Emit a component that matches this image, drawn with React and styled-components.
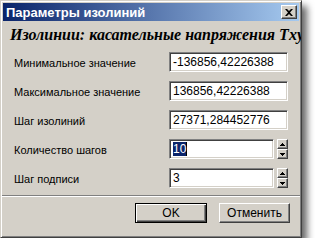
import React from 'react';
import styled, {createGlobalStyle} from 'styled-components';

const Global = createGlobalStyle`
    html, body{
        margin: 0;
        padding: 0;
        background: #fff;
    }
    body{
        font-family: "Liberation Sans", Arial, sans-serif;
        font-size: 11px;
    }
`;

const Window = styled.div`
    width: 302px;
    height: 238px;
    box-sizing: border-box;
    background: #d4d0c8;
    border: 1px solid;
    border-color: #d4d0c8 #404040 #404040 #d4d0c8;
    box-shadow: inset 1px 1px #fff, inset -1px -1px #808080, 5px 6px 7px rgba(0, 0, 0, 0.6);
    padding: 2px;
    display: flex;
    flex-direction: column;
    overflow: hidden;
`;

const TitleBar = styled.div`
    height: 18px;
    display: flex;
    align-items: center;
    justify-content: space-between;
    padding: 0 2px 0 3px;
    background: linear-gradient(to right, #0a246a, #a6caf0);
    color: #fff;
    font-weight: bold;
    font-size: 13px;
`;

const CloseBtn = styled.div`
    width: 16px;
    height: 14px;
    box-sizing: border-box;
    background: #d4d0c8;
    border: 1px solid;
    border-color: #fff #404040 #404040 #fff;
    box-shadow: inset -1px -1px #808080;
    display: flex;
    align-items: center;
    justify-content: center;
`;

/* the caption is wider than the dialog and is clipped at its right edge, as in the original */
const Heading = styled.div`
    font-family: "Liberation Serif", "Times New Roman", serif;
    font-style: italic;
    font-weight: bold;
    font-size: 16px;
    white-space: nowrap;
    padding: 5px 0 0 7px;
    height: 25px;
    color: #000;
`;

const Form = styled.div`
    display: grid;
    grid-template-columns: 155px 1fr;
    row-gap: 9px;
    padding: 1px 0 0 11px;
`;

const Label = styled.div`
    height: 20px;
    line-height: 22px;
    color: #000;
`;

const Field = styled.div`
    display: flex;
    align-items: center;
    gap: 3px;
`;

const Input = styled.div`
    width: ${p => p.$w}px;
    height: 20px;
    box-sizing: border-box;
    background: #fff;
    border: 1px solid;
    border-color: #808080 #fff #fff #808080;
    box-shadow: inset 1px 1px #404040, inset -1px -1px #d4d0c8;
    padding: 0 3px;
    line-height: 19px;
    font-size: 12px;
    color: #000;
    white-space: nowrap;
`;

const Selected = styled.span`
    background: #0a246a;
    color: #fff;
    border-right: 1px solid #000;
`;

const Spinner = styled.div`
    display: flex;
    flex-direction: column;
    width: 11px;
    height: 20px;
`;

const SpinBtn = styled.div`
    flex: 1;
    box-sizing: border-box;
    background: #d4d0c8;
    border: 1px solid;
    border-color: #fff #404040 #404040 #fff;
    box-shadow: inset -1px -1px #808080;
    display: flex;
    align-items: center;
    justify-content: center;
`;

const Separator = styled.div`
    margin: 7px -1px 0;
    height: 0;
    border-top: 1px solid #808080;
    border-bottom: 1px solid #fff;
`;

const Buttons = styled.div`
    display: flex;
    justify-content: flex-end;
    gap: 12px;
    padding: 6px 9px 0 0;
`;

const Button = styled.div`
    width: ${p => p.$w}px;
    height: 20px;
    box-sizing: border-box;
    border: 1px solid;
    border-color: ${p => p.$default ? '#000' : '#fff #404040 #404040 #fff'};
    box-shadow: ${p => p.$default
        ? 'inset 1px 1px #fff, inset -1px -1px #404040, inset -2px -2px #808080'
        : 'inset -1px -1px #808080'};
    display: flex;
    align-items: center;
    justify-content: center;
    font-size: 12px;
    color: #000;
`;

const Arrow = ({up}) => (
    <svg width="5" height="3" viewBox="0 0 5 3">
        <path d={up ? 'M2 0h1v1h1v1h1v1H0V2h1V1h1z' : 'M0 0h5v1H4v1H3v1H2V2H1V1H0z'} fill="#000"/>
    </svg>
);

const Spin = () => (
    <Spinner>
        <SpinBtn><Arrow up/></SpinBtn>
        <SpinBtn><Arrow/></SpinBtn>
    </Spinner>
);

const rows = [
    {label: 'Минимальное значение', value: '-136856,42226388'},
    {label: 'Максимальное значение', value: '136856,42226388'},
    {label: 'Шаг изолиний', value: '27371,284452776'},
    {label: 'Количество шагов', value: '10', spin: true, selected: true},
    {label: 'Шаг подписи', value: '3', spin: true},
];

export default function App() {
    return <>
        <Global/>
        <Window>
            <TitleBar>
                <span>Параметры изолиний</span>
                <CloseBtn>
                    <svg width="8" height="7" viewBox="0 0 8 7">
                        <path d="M0 0h2l2 2 2-2h2L5 3.5 8 7H6L4 5 2 7H0l3-3.5z" fill="#000"/>
                    </svg>
                </CloseBtn>
            </TitleBar>
            <Heading>Изолинии: касательные напряжения Txy</Heading>
            <Form>
                {rows.map((r, i) => <React.Fragment key={i}>
                    <Label>{r.label}</Label>
                    <Field>
                        <Input $w={r.spin ? 105 : 119}>
                            {r.selected ? <Selected>{r.value}</Selected> : r.value}
                        </Input>
                        {r.spin && <Spin/>}
                    </Field>
                </React.Fragment>)}
            </Form>
            <Separator/>
            <Buttons>
                <Button $w={72} $default>OK</Button>
                <Button $w={71}>Отменить</Button>
            </Buttons>
        </Window>
    </>;
}
